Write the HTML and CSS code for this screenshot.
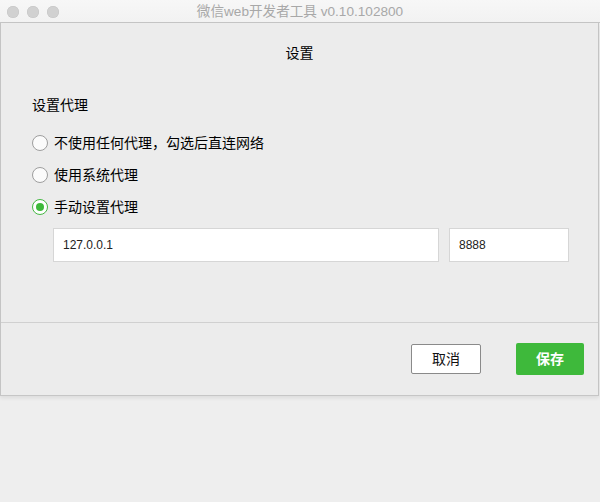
FILE: index.html
```html
<!DOCTYPE html>
<html lang="zh-CN">
<head>
<meta charset="utf-8">
<title>微信web开发者工具</title>
<link rel="stylesheet" href="styles.css">
</head>
<body>
<div class="window">
  <div class="titlebar">
    <div class="lights">
      <span class="light"></span>
      <span class="light"></span>
      <span class="light"></span>
    </div>
    <div class="title">微信web开发者工具 v0.10.102800</div>
    <div></div>
  </div>
  <div class="dialog">
    <div class="main">
      <div class="heading">设置</div>
      <div class="section">
        <div class="section-label">设置代理</div>
        <div class="radios">
          <div class="radio-row"><span class="radio"></span><span class="radio-text">不使用任何代理，勾选后直连网络</span></div>
          <div class="radio-row"><span class="radio"></span><span class="radio-text">使用系统代理</span></div>
          <div class="radio-row"><span class="radio checked"></span><span class="radio-text">手动设置代理</span></div>
        </div>
        <div class="inputs">
          <input class="field host" type="text" value="127.0.0.1">
          <input class="field port" type="text" value="8888">
        </div>
      </div>
    </div>
    <div class="footer">
      <button class="btn btn-cancel">取消</button>
      <button class="btn btn-save">保存</button>
    </div>
  </div>
</div>
</body>
</html>
```
FILE: styles.css
```css
html, body {
  margin: 0;
  padding: 0;
}
body {
  background: #eeeeee;
  font-family: "Liberation Sans", "Noto Sans CJK SC", sans-serif;
  color: #000;
  width: 600px;
  height: 502px;
  overflow: hidden;
}
.window {
  width: 600px;
}
.titlebar {
  height: 22px;
  border-bottom: 1px solid #c6c6c6;
  background: linear-gradient(#f7f7f7, #f2f2f2);
  display: grid;
  grid-template-columns: 1fr auto 1fr;
  align-items: center;
}
.lights {
  display: flex;
  gap: 8px;
  padding-left: 7px;
}
.light {
  width: 12px;
  height: 12px;
  border-radius: 50%;
  background: #d1d1d1;
  box-shadow: inset 0 0 0 0.5px #c4c4c4;
}
.title {
  font-size: 13.6px;
  line-height: 22px;
  color: #a8a8a8;
  padding-top: 1px;
}
.dialog {
  width: 597px;
  background: #ececec;
  border-left: 1px solid #c4c4c4;
  border-right: 1px solid #c4c4c4;
  border-bottom: 1px solid #c6c6c6;
  box-shadow: 0 2px 4px rgba(0, 0, 0, 0.08);
}
.main {
  padding: 20px 0 60px 0;
}
.heading {
  font-size: 14px;
  line-height: 20px;
  text-align: center;
}
.section {
  padding-left: 31px;
}
.section-label {
  margin-top: 32px;
  font-size: 14px;
  line-height: 20px;
}
.radios {
  margin-top: 12px;
  display: flex;
  flex-direction: column;
}
.radio-row {
  height: 32px;
  display: flex;
  align-items: center;
  gap: 6px;
}
.radio {
  box-sizing: border-box;
  width: 16px;
  height: 16px;
  border-radius: 50%;
  border: 1px solid #9e9e9e;
  background: #fbfbfb;
  display: flex;
  align-items: center;
  justify-content: center;
}
.radio.checked {
  border-color: #45b843;
  background: #ffffff;
}
.radio.checked::after {
  content: "";
  width: 8px;
  height: 8px;
  border-radius: 50%;
  background: #3db93a;
}
.radio-text {
  font-size: 14px;
  line-height: 20px;
}
.inputs {
  margin-top: 5px;
  margin-left: 21px;
  display: flex;
  gap: 10px;
}
.field {
  box-sizing: border-box;
  height: 34px;
  margin: 0;
  border: 1px solid #d6d6d6;
  background: #ffffff;
  padding: 0 9px;
  font-family: "Liberation Sans", sans-serif;
  font-size: 12px;
  color: #222;
  outline: none;
  border-radius: 0;
}
.host {
  width: 386px;
}
.port {
  width: 120px;
}
.footer {
  height: 72px;
  border-top: 1px solid #d0d0d0;
  display: flex;
  justify-content: flex-end;
  align-items: center;
  gap: 35px;
  padding-right: 14px;
}
.btn {
  box-sizing: border-box;
  margin: 0;
  padding: 0;
  font-family: "Liberation Sans", "Noto Sans CJK SC", sans-serif;
  font-size: 14px;
  line-height: 20px;
  cursor: default;
}
.btn-cancel {
  width: 70px;
  height: 30px;
  background: #ffffff;
  border: 1px solid #8a8a8a;
  border-radius: 2px;
  color: #111;
}
.btn-save {
  width: 68px;
  height: 32px;
  background: #3eb93b;
  border: none;
  border-radius: 2px;
  color: #ffffff;
  font-weight: bold;
}
```
